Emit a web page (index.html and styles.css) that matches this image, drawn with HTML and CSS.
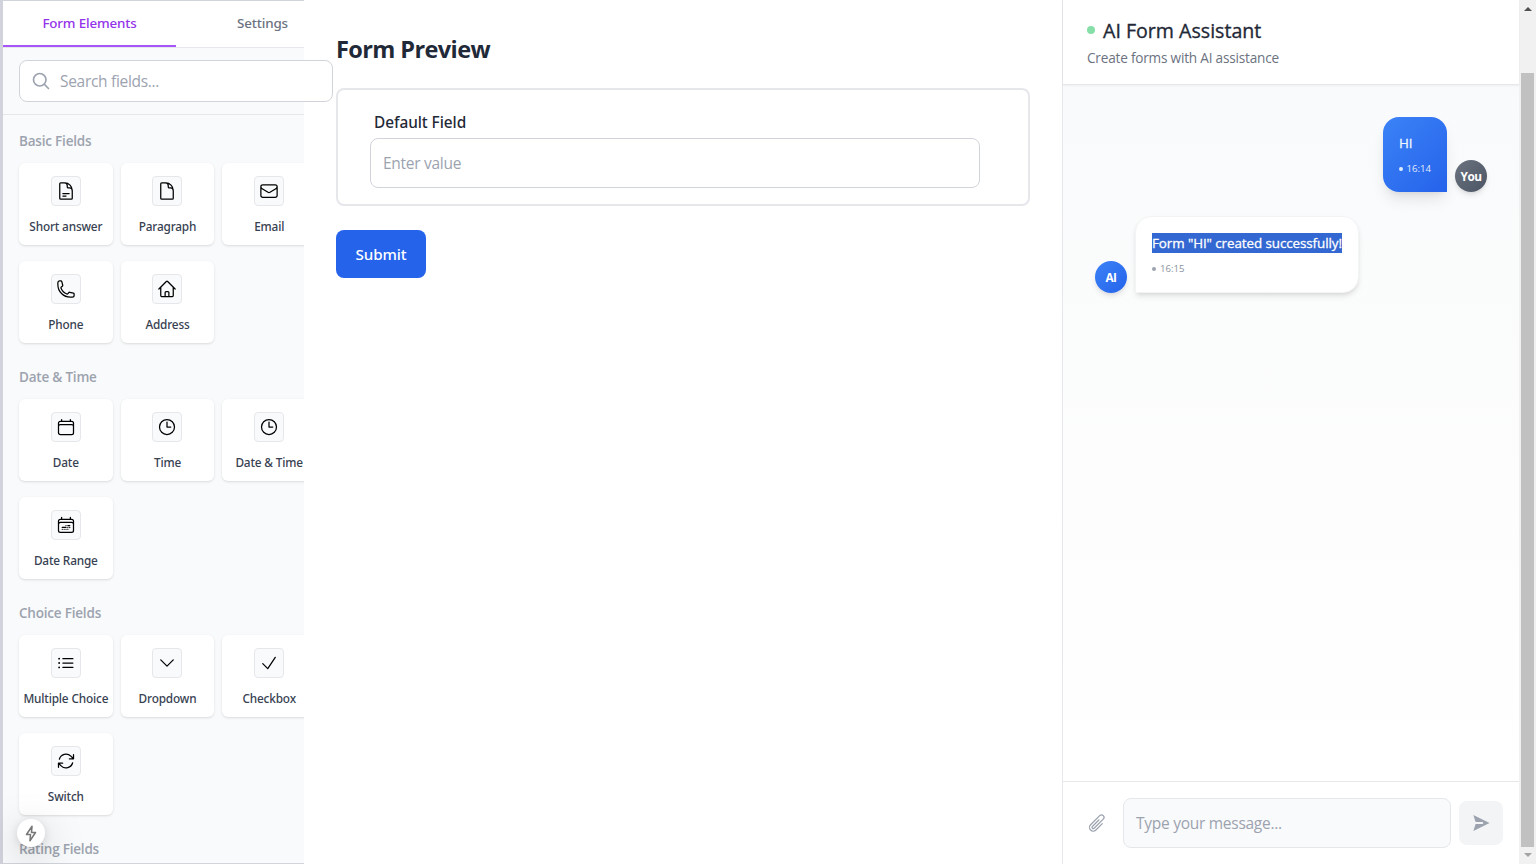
FILE: index.html
```
<!DOCTYPE html>
<html lang="en">
<head>
<meta charset="utf-8">
<title>Form Builder</title>
<link rel="stylesheet" href="styles.css">
</head>
<body>
<svg width="0" height="0" class="sprite">
  <symbol id="doc-text" viewBox="0 0 24 24"><path d="M19.5 14.25v-2.625a3.375 3.375 0 0 0-3.375-3.375h-1.5A1.125 1.125 0 0 1 13.5 7.125v-1.5a3.375 3.375 0 0 0-3.375-3.375H8.25m0 12.75h7.5m-7.5 3H12M10.5 2.25H5.625c-.621 0-1.125.504-1.125 1.125v17.25c0 .621.504 1.125 1.125 1.125h12.75c.621 0 1.125-.504 1.125-1.125V11.25a9 9 0 0 0-9-9Z"/></symbol>
  <symbol id="doc" viewBox="0 0 24 24"><path d="M19.5 14.25v-2.625a3.375 3.375 0 0 0-3.375-3.375h-1.5A1.125 1.125 0 0 1 13.5 7.125v-1.5a3.375 3.375 0 0 0-3.375-3.375H8.25m2.25 0H5.625c-.621 0-1.125.504-1.125 1.125v17.25c0 .621.504 1.125 1.125 1.125h12.75c.621 0 1.125-.504 1.125-1.125V11.25a9 9 0 0 0-9-9Z"/></symbol>
  <symbol id="mail" viewBox="0 0 24 24"><path d="M21.75 6.75v10.5a2.25 2.25 0 0 1-2.25 2.25h-15a2.25 2.25 0 0 1-2.25-2.25V6.75m19.5 0A2.25 2.25 0 0 0 19.5 4.5h-15a2.25 2.25 0 0 0-2.25 2.25m19.5 0v.243a2.25 2.25 0 0 1-1.07 1.916l-7.5 4.615a2.25 2.25 0 0 1-2.36 0L3.32 8.91a2.25 2.25 0 0 1-1.07-1.916V6.75"/></symbol>
  <symbol id="phone" viewBox="0 0 24 24"><path d="M2.25 6.75c0 8.284 6.716 15 15 15h2.25a2.25 2.25 0 0 0 2.25-2.25v-1.372c0-.516-.351-.966-.852-1.091l-4.423-1.106c-.44-.11-.902.055-1.173.417l-.97 1.293c-.282.376-.769.542-1.21.38a12.035 12.035 0 0 1-7.143-7.143c-.162-.441.004-.928.38-1.21l1.293-.97c.363-.271.527-.734.417-1.173L6.963 3.102a1.125 1.125 0 0 0-1.091-.852H4.5A2.25 2.25 0 0 0 2.25 4.5v2.25Z"/></symbol>
  <symbol id="home" viewBox="0 0 24 24"><path d="m2.25 12 8.954-8.955c.44-.439 1.152-.439 1.591 0L21.75 12M4.5 9.75v10.125c0 .621.504 1.125 1.125 1.125H9.75v-4.875c0-.621.504-1.125 1.125-1.125h2.25c.621 0 1.125.504 1.125 1.125V21h4.125c.621 0 1.125-.504 1.125-1.125V9.75M8.25 21h8.25"/></symbol>
  <symbol id="calendar" viewBox="0 0 24 24"><path d="M6.75 3v2.25M17.25 3v2.25M3 18.75V7.5a2.25 2.25 0 0 1 2.25-2.25h13.5A2.25 2.25 0 0 1 21 7.5v11.25m-18 0A2.25 2.25 0 0 0 5.25 21h13.5A2.25 2.25 0 0 0 21 18.75m-18 0v-7.5A2.25 2.25 0 0 1 5.25 9h13.5A2.25 2.25 0 0 1 21 11.25v7.5"/></symbol>
  <symbol id="range" viewBox="0 0 24 24"><path d="M6.75 2.994v2.25m10.5-2.25v2.25m-14.252 13.5V7.491a2.25 2.25 0 0 1 2.25-2.25h13.5a2.25 2.25 0 0 1 2.25 2.25v11.251m-18 0a2.25 2.25 0 0 0 2.25 2.25h13.5a2.25 2.25 0 0 0 2.25-2.25m-18 0v-7.5a2.25 2.25 0 0 1 2.25-2.25h13.5a2.25 2.25 0 0 1 2.25 2.25v7.5m-6.75-6h2.25m-9 2.25h4.5m.002-2.25h.005v.006H12v-.006Zm-.001 4.5h.006v.006h-.006v-.005Zm-2.25.001h.005v.006H9.75v-.006Zm-2.25 0h.005v.005h-.006v-.005Zm6.75-2.247h.005v.005h-.005v-.005Zm0 2.247h.006v.006h-.006v-.006Zm2.25-2.248h.006V15H16.5v-.005Z"/></symbol>
  <symbol id="clock" viewBox="0 0 24 24"><path d="M12 6v6h4.5m4.5 0a9 9 0 1 1-18 0 9 9 0 0 1 18 0Z"/></symbol>
  <symbol id="list" viewBox="0 0 24 24"><path d="M8.25 6.75h12M8.25 12h12m-12 5.25h12M3.75 6.75h.007v.008H3.75V6.75Zm.375 0a.375.375 0 1 1-.75 0 .375.375 0 0 1 .75 0ZM3.75 12h.007v.008H3.75V12Zm.375 0a.375.375 0 1 1-.75 0 .375.375 0 0 1 .75 0Zm-.375 5.25h.007v.008H3.75v-.008Zm.375 0a.375.375 0 1 1-.75 0 .375.375 0 0 1 .75 0Z"/></symbol>
  <symbol id="down" viewBox="0 0 24 24"><path d="m19.5 8.25-7.5 7.5-7.5-7.5"/></symbol>
  <symbol id="check" viewBox="0 0 24 24"><path d="m4.5 12.75 6 6 9-13.5"/></symbol>
  <symbol id="refresh" viewBox="0 0 24 24"><path d="M16.023 9.348h4.992v-.001M2.985 19.644v-4.992m0 0h4.992m-4.993 0 3.181 3.183a8.25 8.25 0 0 0 13.803-3.7M4.031 9.865a8.25 8.25 0 0 1 13.803-3.7l3.181 3.182m0-4.991v4.99"/></symbol>
  <symbol id="search" viewBox="0 0 24 24"><path d="m21 21-5.197-5.197m0 0A7.5 7.5 0 1 0 5.196 5.196a7.5 7.5 0 0 0 10.607 10.607Z"/></symbol>
  <symbol id="clip" viewBox="0 0 24 24"><path d="m18.375 12.739-7.693 7.693a4.5 4.5 0 0 1-6.364-6.364l10.94-10.94A3 3 0 1 1 19.5 7.372L8.552 18.32m.009-.01-.01.01m5.699-9.941-7.81 7.81a1.5 1.5 0 0 0 2.112 2.13"/></symbol>
</svg>

<div class="app">
  <aside class="sidebar">
    <nav class="tabs">
      <div class="tab active">Form Elements</div>
      <div class="tab">Settings</div>
    </nav>
    <div class="search-row">
      <label class="search"><svg class="icon"><use href="#search"/></svg><span>Search fields...</span></label>
    </div>
    <div class="fields">
      <section class="group">
        <h3>Basic Fields</h3>
        <div class="grid">
          <div class="card"><i><svg class="icon"><use href="#doc-text"/></svg></i><span>Short answer</span></div>
          <div class="card"><i><svg class="icon"><use href="#doc"/></svg></i><span>Paragraph</span></div>
          <div class="card"><i><svg class="icon"><use href="#mail"/></svg></i><span>Email</span></div>
          <div class="card"><i><svg class="icon"><use href="#phone"/></svg></i><span>Phone</span></div>
          <div class="card"><i><svg class="icon"><use href="#home"/></svg></i><span>Address</span></div>
        </div>
      </section>
      <section class="group">
        <h3>Date &amp; Time</h3>
        <div class="grid">
          <div class="card"><i><svg class="icon"><use href="#calendar"/></svg></i><span>Date</span></div>
          <div class="card"><i><svg class="icon"><use href="#clock"/></svg></i><span>Time</span></div>
          <div class="card"><i><svg class="icon"><use href="#clock"/></svg></i><span>Date &amp; Time</span></div>
          <div class="card"><i><svg class="icon"><use href="#range"/></svg></i><span>Date Range</span></div>
        </div>
      </section>
      <section class="group">
        <h3>Choice Fields</h3>
        <div class="grid">
          <div class="card"><i><svg class="icon"><use href="#list"/></svg></i><span>Multiple Choice</span></div>
          <div class="card"><i><svg class="icon"><use href="#down"/></svg></i><span>Dropdown</span></div>
          <div class="card"><i><svg class="icon"><use href="#check"/></svg></i><span>Checkbox</span></div>
          <div class="card"><i><svg class="icon"><use href="#refresh"/></svg></i><span>Switch</span></div>
        </div>
      </section>
      <section class="group">
        <h3>Rating Fields</h3>
      </section>
    </div>
  </aside>

  <main class="preview">
    <h1>Form Preview</h1>
    <div class="form-card">
      <div class="label">Default Field</div>
      <div class="input">Enter value</div>
    </div>
    <button class="submit">Submit</button>
  </main>

  <section class="assistant">
    <header class="head">
      <h2><b class="status"></b>AI Form Assistant</h2>
      <p>Create forms with AI assistance</p>
    </header>
    <div class="chat">
      <div class="row mine">
        <div class="bubble"><div class="msg">HI</div><div class="time">16:14</div></div>
        <div class="avatar">You</div>
      </div>
      <div class="row">
        <div class="avatar">AI</div>
        <div class="bubble"><div class="msg"><mark>Form "HI" created successfully!</mark></div><div class="time">16:15</div></div>
      </div>
    </div>
    <footer class="composer">
      <svg class="icon clip"><use href="#clip"/></svg>
      <div class="message">Type your message...</div>
      <div class="send"><svg viewBox="0 0 20 20"><path d="M1.5 1 19.5 10 1.5 19 4 11H11.5a1 1 0 0 0 0-2H4Z"/></svg></div>
    </footer>
  </section>

  <div class="scrollbar">
    <svg class="arrow" viewBox="0 0 8 4"><path d="M0 4 4 0 8 4Z" fill="#505050"/></svg>
    <div class="thumb"></div>
    <svg class="arrow" viewBox="0 0 8 4"><path d="M0 0 4 4 8 0Z" fill="#a3a3a3"/></svg>
  </div>
</div>

<div class="dev-badge"><svg viewBox="0 0 14 20"><path d="M8.2 1.5 1.7 11.2H6.4L5.8 18.5 12.3 8.8H7.6Z"/></svg></div>
</body>
</html>
```
FILE: styles.css
```
* { box-sizing: border-box; }
body {
  margin: 0;
  height: 864px;
  overflow: hidden;
  background: #fff;
  color: #1f2937;
  font-family: "Open Sans", "Noto Sans", sans-serif;
}
h1, h2, h3, p { margin: 0; }
.sprite { position: absolute; }
.icon {
  width: 20px;
  height: 20px;
  flex: none;
  display: block;
  fill: none;
  stroke: currentColor;
  stroke-width: 1.5;
  stroke-linecap: round;
  stroke-linejoin: round;
}
.app { display: flex; height: 864px; }

/* Sidebar */
.sidebar {
  width: 304px;
  flex: none;
  border: 1px solid #d1d5db;
  border-left: 3px solid #d1d2dc;
  border-right: 0;
  background: #f9fafb;
  display: flex;
  flex-direction: column;
}
.tabs {
  display: flex;
  height: 47px;
  flex: none;
  overflow: hidden;
  background: #fff;
  border-bottom: 1px solid #e5e7eb;
}
.tab {
  width: 173px;
  flex: none;
  height: 46px;
  line-height: 44px;
  text-align: center;
  font-family: "Noto Sans", sans-serif;
  font-size: 13.4px;
  font-weight: 500;
  letter-spacing: -0.16px;
  color: #6b7280;
}
.tab.active { color: #9333ea; border-bottom: 2px solid #a855f7; }
.search-row {
  height: 67px;
  flex: none;
  padding: 12px 16px;
  border-bottom: 1px solid #e5e7eb;
}
.search {
  position: relative;
  z-index: 1;
  display: flex;
  align-items: center;
  gap: 9px;
  width: 314px;
  height: 42px;
  padding-left: 11px;
  border: 1px solid #d1d5db;
  border-radius: 8px;
  background: #fff;
  color: #9ca3af;
  font-size: 15.5px;
  letter-spacing: -0.3px;
}
.search .icon { stroke-width: 2; }
.fields { flex: 1; overflow: hidden; padding: 16px 16px 0; }
.group { width: 297px; margin-bottom: 24px; }
.group h3 {
  font-size: 13.5px;
  line-height: 21px;
  font-weight: 600;
  letter-spacing: -0.2px;
  color: #9ca3af;
  margin-bottom: 11px;
}
.grid {
  display: grid;
  grid-template-columns: repeat(3, 1fr);
  column-gap: 8px;
  row-gap: 16px;
}
.card {
  height: 82px;
  min-width: 0;
  padding-top: 13px;
  display: flex;
  flex-direction: column;
  align-items: center;
  gap: 12px;
  background: #fff;
  border-radius: 6px;
  box-shadow: 0 1px 3px rgba(0, 0, 0, .1), 0 1px 2px -1px rgba(0, 0, 0, .1);
  font-family: "Noto Sans", sans-serif;
  font-size: 11.8px;
  line-height: 16px;
  font-weight: 500;
  letter-spacing: -0.16px;
  color: #374151;
  white-space: nowrap;
}
.card i {
  width: 30px;
  height: 30px;
  display: grid;
  place-items: center;
  border: 1px solid #e5e7eb;
  border-radius: 4px;
  background: #f9fafb;
  color: #000;
}

/* Form preview */
.preview { width: 758px; flex: none; padding: 33px 32px 32px; }
.preview h1 {
  font-size: 23.5px;
  line-height: 32px;
  font-weight: 700;
  letter-spacing: -0.6px;
  margin-bottom: 23px;
}
.form-card {
  width: 694px;
  height: 118px;
  border: 2px solid #e5e7eb;
  border-radius: 8px;
  padding: 21px 48px 16px 32px;
}
.label {
  font-family: "Noto Sans", sans-serif;
  font-size: 15.4px;
  line-height: 24px;
  font-weight: 500;
  letter-spacing: -0.06px;
  padding-left: 4px;
  margin-bottom: 3px;
}
.input {
  height: 50px;
  line-height: 49px;
  padding-left: 12px;
  border: 1px solid #d1d5db;
  border-radius: 8px;
  color: #9ca3af;
  font-size: 15.5px;
  letter-spacing: -0.28px;
}
.submit {
  display: block;
  width: 90px;
  height: 48px;
  margin-top: 24px;
  padding: 0 0 1px;
  border: 0;
  border-radius: 8px;
  background: #2563eb;
  color: #fff;
  font: 500 15.2px "Noto Sans", sans-serif;
  letter-spacing: -0.1px;
}

/* Assistant */
.assistant {
  width: 457px;
  flex: none;
  border-left: 1px solid #e5e7eb;
  display: flex;
  flex-direction: column;
}
.head {
  position: relative;
  height: 85px;
  flex: none;
  padding: 17px 24px 0;
  border-bottom: 1px solid #e5e7eb;
  box-shadow: 0 1px 2px rgba(0, 0, 0, .05);
}
.head h2 {
  display: flex;
  align-items: center;
  gap: 8px;
  font-size: 19.6px;
  line-height: 28px;
  font-weight: 500;
  letter-spacing: 0;
  -webkit-text-stroke: 0.35px currentColor;
}
.status { width: 8px; height: 8px; margin-top: -2px; border-radius: 50%; background: #86dfa7; }
.head p {
  margin-top: 3px;
  font-size: 13.6px;
  line-height: 20px;
  letter-spacing: -0.2px;
  color: #6b7280;
}
.chat {
  flex: 1;
  padding: 32px;
  display: flex;
  flex-direction: column;
  gap: 24px;
  background: linear-gradient(#f9fafb, #fff);
}
.row { display: flex; align-items: flex-end; gap: 8px; }
.mine { justify-content: flex-end; }
.avatar {
  width: 32px;
  height: 32px;
  border-radius: 50%;
  background: linear-gradient(135deg, #3b82f6, #2563eb);
  box-shadow: 0 4px 6px -1px rgba(0, 0, 0, .1), 0 2px 4px -2px rgba(0, 0, 0, .1);
  color: #fff;
  font-size: 11.8px;
  line-height: 33px;
  font-weight: 700;
  text-align: center;
  letter-spacing: -0.5px;
}
.mine .avatar { background: linear-gradient(135deg, #6b7280, #4b5563); }
.bubble {
  height: 77px;
  padding: 16px;
  border: 1px solid #f3f4f6;
  border-radius: 16px 16px 16px 0;
  background: #fff;
  box-shadow: 0 4px 6px -1px rgba(0, 0, 0, .1), 0 2px 4px -2px rgba(0, 0, 0, .1);
}
.mine .bubble {
  width: 64px;
  height: 75px;
  border: 0;
  border-radius: 16px 16px 0 16px;
  background: linear-gradient(135deg, #3b82f6, #2563eb);
  box-shadow: 0 10px 15px -3px rgba(0, 0, 0, .1), 0 4px 6px -4px rgba(0, 0, 0, .1);
  color: #eff6ff;
}
.msg {
  font-size: 13.4px;
  line-height: 20px;
  font-weight: 500;
  letter-spacing: -0.08px;
  white-space: nowrap;
  -webkit-text-stroke: 0.3px currentColor;
}
mark { display: block; background: #3367d1; color: #fff; }
.time {
  display: flex;
  align-items: center;
  gap: 4px;
  margin-top: 8px;
  font-size: 9.6px;
  line-height: 15px;
  color: #8b92a0;
}
.time::before {
  content: "";
  width: 4px;
  height: 4px;
  border-radius: 50%;
  background: #9ca3af;
}
.mine .time { color: #e3ecfe; }
.mine .time::before { background: #dbeafe; }
.composer {
  height: 83px;
  flex: none;
  display: flex;
  align-items: center;
  padding: 0 16px 0 24px;
  border-top: 1px solid #e5e7eb;
}
.clip { color: #9ca3af; }
.message {
  width: 328px;
  height: 50px;
  margin: 0 8px 0 16px;
  padding-left: 12px;
  line-height: 49px;
  border: 1px solid #e5e7eb;
  border-radius: 8px;
  background: #f9fafb;
  color: #9ca3af;
  font-size: 15.5px;
  letter-spacing: -0.27px;
}
.send {
  width: 44px;
  height: 44px;
  border-radius: 8px;
  display: grid;
  place-items: center;
  background: #f3f4f6;
}
.send svg { width: 18px; height: 18px; fill: #9ca3af; }

/* Page scrollbar */
.scrollbar {
  width: 17px;
  flex: none;
  height: 864px;
  padding: 7px 2px;
  display: flex;
  flex-direction: column;
  align-items: center;
  background: #f1f1f1;
}
.arrow { width: 8px; height: 4px; }
.thumb { width: 13px; height: 774px; margin: 62px 0 auto; background: #c1c1c1; }

/* Floating indicator */
.dev-badge {
  position: absolute;
  left: 17px;
  top: 819px;
  z-index: 5;
  width: 28px;
  height: 28px;
  border-radius: 50%;
  display: grid;
  place-items: center;
  background: #fff;
  box-shadow: 0 11px 40px rgba(0, 0, 0, .25), 0 2px 10px rgba(0, 0, 0, .12);
}
.dev-badge svg {
  width: 12px;
  height: 17px;
  fill: none;
  stroke: #777;
  stroke-width: 1.8;
  stroke-linejoin: round;
}
```
